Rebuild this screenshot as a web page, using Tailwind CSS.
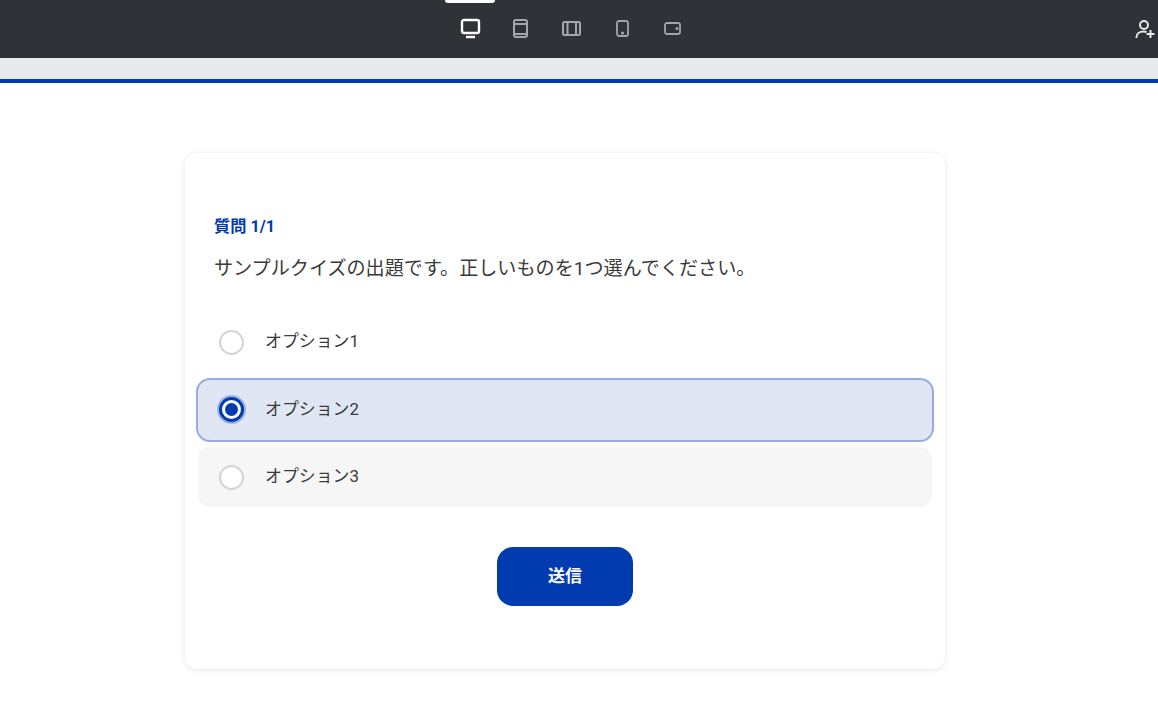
<!DOCTYPE html>
<html lang="ja">

<head>
    <meta charset="UTF-8">
    <meta name="viewport" content="width=device-width, initial-scale=1.0">
    <title>クイズ</title>
    <script src="https://cdn.jsdelivr.net/npm/@tailwindcss/browser@4"></script>
</head>

<body class="bg-white h-[720px] overflow-hidden font-['Roboto','Noto_Sans_CJK_JP',sans-serif]">
    <!-- toolbar -->
    <header class="relative h-[58px] bg-[#2f3237] flex items-center justify-center">
        <div class="absolute top-0 left-[445px] w-[50px] h-[3px] bg-white rounded-b-[3px]"></div>
        <div class="flex items-center gap-[27px] ml-[-14px]">
            <svg class="w-[24px] h-[24px]" viewBox="0 0 24 24" fill="none" stroke="#fff" stroke-width="2.400"><rect x="4" y="3" width="17" height="13" rx="2"/><path d="M8 20h9"/></svg>
            <svg class="w-[24px] h-[24px]" viewBox="0 0 24 24" fill="none" stroke="#a4a6a9" stroke-width="2"><rect x="5" y="3" width="13" height="17" rx="2"/><path d="M5 7h13M5 17h13"/></svg>
            <svg class="w-[24px] h-[24px]" viewBox="0 0 24 24" fill="none" stroke="#a4a6a9" stroke-width="2"><rect x="3" y="5" width="17" height="13" rx="1.5"/><path d="M7.500 5v13M16 5v13"/></svg>
            <svg class="w-[24px] h-[24px]" viewBox="0 0 24 24" fill="none" stroke="#a4a6a9" stroke-width="1.800"><rect x="6" y="4" width="11" height="15" rx="2"/><circle cx="11.500" cy="16" r="0.7" fill="#a4a6a9"/></svg>
            <svg class="w-[24px] h-[24px]" viewBox="0 0 24 24" fill="none" stroke="#a4a6a9" stroke-width="1.800"><rect x="3" y="6" width="15" height="11" rx="2"/><circle cx="15" cy="11.500" r="0.7" fill="#a4a6a9"/></svg>
        </div>
        <svg class="absolute left-[1132px] top-[16px] w-[26px] h-[26px]" viewBox="0 0 26 26" fill="none" stroke="#e8e8e8" stroke-width="2"><circle cx="12" cy="9" r="4"/><path d="M4.500 22v-1c0-3.500 3-5.500 7-5.500 1 0 2 .1 3 .5"/><path d="M14.500 18h8M18.500 14v8"/></svg>
    </header>

    <!-- browser strip -->
    <div class="h-[21px] bg-[#e8e9ea]"></div>
    <div class="h-[4px] bg-[#003bb0]"></div>

    <!-- quiz card -->
    <main class="pt-[70px] pl-[185px]">
        <section class="w-[760px] h-[516px] bg-white rounded-[12px] shadow-[0_1px_6px_rgba(0,0,0,0.1)] pt-[60px] px-[13px]">
            <p class="pl-[16px] text-[16.200px] leading-[28px] font-bold text-[#003bb0]">質問 1/1</p>
            <p class="pl-[16px] mt-[14px] text-[19.100px] leading-[28px] text-[#3a3a3a]">サンプルクイズの出題です。正しいものを1つ選んでください。</p>

            <div class="mt-[29px] flex flex-col gap-[7.500px] text-[#3a3a3a] text-[16.900px]">
                <label class="flex items-center h-[60px] rounded-[12px] pl-[21px]">
                    <span class="w-[25px] h-[25px] rounded-full border-2 border-[#d4d4d4] bg-white"></span>
                    <span class="ml-[21px]">オプション1</span>
                </label>
                <label class="flex items-center h-[60px] rounded-[12px] bg-[#e0e6f4] pl-[21px] shadow-[0_0_0_2px_#95ade0]">
                    <span class="w-[25px] h-[25px] rounded-full border-[3px] border-[#003bb0] bg-white flex items-center justify-center shadow-[0_0_0_2px_rgba(0,59,176,0.3)]">
                        <span class="w-[13px] h-[13px] rounded-full bg-[#003bb0]"></span>
                    </span>
                    <span class="ml-[21px]">オプション2</span>
                </label>
                <label class="flex items-center h-[60px] rounded-[12px] bg-[#f6f6f6] pl-[21px]">
                    <span class="w-[25px] h-[25px] rounded-full border-2 border-[#d4d4d4] bg-white"></span>
                    <span class="ml-[21px]">オプション3</span>
                </label>
            </div>

            <div class="mt-[40px] flex justify-center">
                <button class="w-[135.500px] h-[59px] rounded-[16px] bg-[#003bb0] text-white font-bold text-[17px]">送信</button>
            </div>
        </section>
    </main>
</body>

</html>
